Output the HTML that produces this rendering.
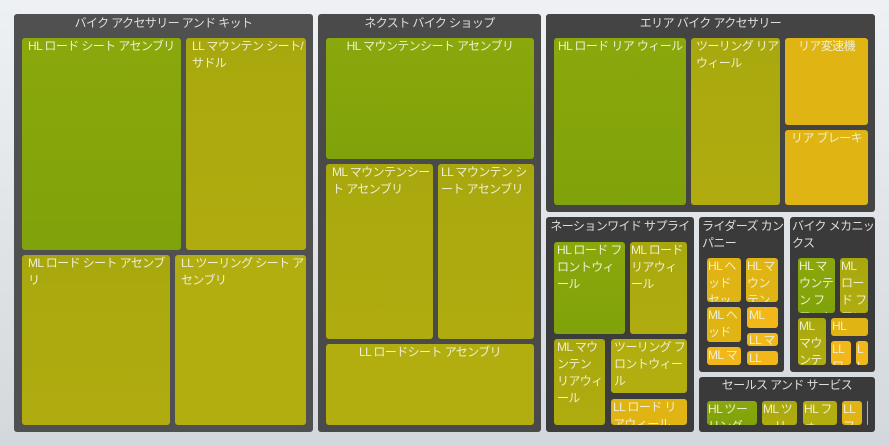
<!DOCTYPE html>
<html><head><meta charset="utf-8"><style>
html,body{margin:0;padding:0}
body{width:889px;height:446px;position:relative;overflow:hidden;background:linear-gradient(#eef1f4,#d3d8dd);font-family:"Liberation Sans","Noto Sans CJK JP",sans-serif;font-size:12px;letter-spacing:-0.6px}
.g{position:absolute;background:#464646;border-radius:3px;color:#ddd}
.g .t{position:absolute;left:0;right:0;top:0;text-align:center;line-height:17px;padding-top:1px;white-space:nowrap;overflow:hidden}
.c{position:absolute;border-radius:3px;color:#eeeed0;line-height:17px;padding:0 0 0 6px;box-sizing:border-box;overflow:hidden;word-break:break-all}
.ct{text-align:center;padding:0}
.a{background:linear-gradient(#8aa80c,#80a20a)}
.b{background:linear-gradient(#a8a80e,#b0ac10)}
.d{background:#b2ae10}
.e{background:#e0b412}
.f{background:#f2b81a}
</style></head><body>
<div class="g" style="left:14px;top:14px;width:299px;height:418px;background:#505050"><div class="t">バイク アクセサリー アンド キット</div></div>
<div class="c a" style="left:22px;top:38px;width:159px;height:212px">HL ロード シート アセンブリ</div>
<div class="c b" style="left:186px;top:38px;width:120px;height:212px">LL マウンテン シート/サドル</div>
<div class="c b" style="left:22px;top:255px;width:148px;height:170px">ML ロード シート アセンブリ</div>
<div class="c d" style="left:175px;top:255px;width:131px;height:170px">LL ツーリング シート アセンブリ</div>

<div class="g" style="left:318px;top:14px;width:223px;height:418px;background:#4a4a4a"><div class="t">ネクスト バイク ショップ</div></div>
<div class="c a ct" style="left:326px;top:38px;width:208px;height:121px">HL マウンテンシート アセンブリ</div>
<div class="c b" style="left:326px;top:164px;width:107px;height:175px">ML マウンテンシート アセンブリ</div>
<div class="c b" style="left:438px;top:164px;width:96px;height:175px;padding-left:3px">LL マウンテン シート アセンブリ</div>
<div class="c d ct" style="left:326px;top:344px;width:208px;height:81px">LL ロードシート アセンブリ</div>

<div class="g" style="left:546px;top:14px;width:329px;height:198px;background:#444"><div class="t">エリア バイク アクセサリー</div></div>
<div class="c a" style="left:554px;top:38px;width:132px;height:167px;padding-left:4px">HL ロード リア ウィール</div>
<div class="c b" style="left:691px;top:38px;width:89px;height:167px;padding-left:5px">ツーリング リア ウィール</div>
<div class="c e ct" style="left:785px;top:38px;width:83px;height:87px">リア変速機</div>
<div class="c e ct" style="left:785px;top:130px;width:83px;height:75px">リア ブレーキ</div>

<div class="g" style="left:546px;top:217px;width:148px;height:215px;background:#3c3c3c"><div class="t">ネーションワイド サプライ</div></div>
<div class="c a" style="left:554px;top:242px;width:71px;height:92px;padding-left:3px">HL ロード フロントウィール</div>
<div class="c b" style="left:630px;top:242px;width:57px;height:92px;padding-left:1px">ML ロード リアウィール</div>
<div class="c b" style="left:554px;top:339px;width:51px;height:86px;padding-left:3px">ML マウンテン リアウィール</div>
<div class="c d" style="left:611px;top:339px;width:76px;height:54px;padding-left:3px">ツーリング フロントウィール</div>
<div class="c e" style="left:611px;top:399px;width:76px;height:26px;padding-left:2px">LL ロード リアウィール</div>

<div class="g" style="left:699px;top:217px;width:85px;height:155px;background:#3a3a3a"><div class="t" style="text-align:left;padding-left:3px;white-space:normal">ライダーズ カンパニー</div></div>
<div class="c e" style="left:707px;top:258px;width:34px;height:44px;padding-left:1px">HL ヘッドセット</div>
<div class="c e" style="left:746px;top:258px;width:32px;height:44px;padding-left:1px">HL マウンテン</div>
<div class="c e" style="left:707px;top:307px;width:34px;height:35px;padding-left:1px">ML ヘッド</div>
<div class="c f" style="left:747px;top:307px;width:31px;height:21px;padding-left:2px">ML ー</div>
<div class="c f" style="left:747px;top:333px;width:31px;height:13px;padding-left:2px;line-height:15px">LL マ</div>
<div class="c f" style="left:707px;top:347px;width:34px;height:18px;padding-left:1px">ML マ</div>
<div class="c f" style="left:747px;top:351px;width:31px;height:14px;padding-left:2px;line-height:15px">LL</div>

<div class="g" style="left:790px;top:217px;width:85px;height:155px;background:#3a3a3a"><div class="t" style="text-align:left;padding-left:2px;white-space:normal">バイク メカニックス</div></div>
<div class="c a" style="left:798px;top:258px;width:37px;height:55px;padding-left:1px">HL マウンテン フロント</div>
<div class="c b" style="left:840px;top:258px;width:28px;height:55px;padding-left:1px">ML ロード フロン</div>
<div class="c b" style="left:798px;top:318px;width:28px;height:47px;padding-left:1px">ML マウンテ</div>
<div class="c e" style="left:831px;top:318px;width:37px;height:18px;padding-left:1px">HL</div>
<div class="c f" style="left:831px;top:341px;width:20px;height:24px;padding-left:1px">LL ロ</div>
<div class="c f" style="left:856px;top:341px;width:12px;height:24px;padding-left:1px">L L</div>

<div class="g" style="left:699px;top:377px;width:176px;height:55px;background:#3a3a3a"><div class="t" style="padding-top:0">セールス アンド サービス</div></div>
<div class="c a" style="left:707px;top:401px;width:50px;height:24px;padding-left:1px">HL ツーリング</div>
<div class="c b" style="left:762px;top:401px;width:35px;height:24px;padding-left:1px">ML ツーリ</div>
<div class="c d" style="left:803px;top:401px;width:34px;height:24px;padding-left:1px">HL フォ</div>
<div class="c e" style="left:842px;top:401px;width:20px;height:24px;padding-left:1px">LL フ</div>
<div class="c e" style="left:867px;top:401px;width:1px;height:24px;padding:0"></div>
</body></html>
